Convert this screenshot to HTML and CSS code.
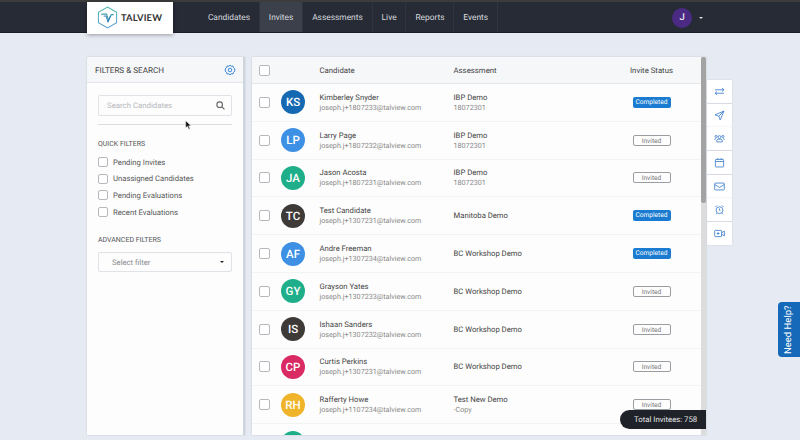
FILE: index.html
```html
<!DOCTYPE html>
<html lang="en">
<head>
<meta charset="utf-8">
<title>Talview Invites</title>
<link rel="stylesheet" href="styles.css">
</head>
<body>
<header class="topbar">
  <div class="logo">
    <svg class="logo-mark" viewBox="0 0 22 24" width="21" height="23">
      <defs><linearGradient id="lg" x1="0" y1="0" x2="0" y2="1"><stop offset="0" stop-color="#4fb9a8"/><stop offset="1" stop-color="#5b9bd5"/></linearGradient></defs>
      <path d="M11 1 L20.5 6.5 V17.5 L11 23 L1.5 17.5 V6.5 Z" fill="none" stroke="url(#lg)" stroke-width="1.1"/>
      <path d="M4.5 8.5 H10 L12 15 L15 9 H17.5" fill="none" stroke="#3f9fb0" stroke-width="1.2"/>
      <path d="M7 10.5 H9.5 L11.5 17 L14 10.5" fill="none" stroke="#2f7fb5" stroke-width="1"/>
    </svg>
    <span class="logo-text">TALVIEW</span>
  </div>
  <nav class="nav">
    <a class="nav-item">Candidates</a>
    <a class="nav-item active">Invites</a>
    <a class="nav-item">Assessments</a>
    <a class="nav-item">Live</a>
    <a class="nav-item">Reports</a>
    <a class="nav-item">Events</a>
  </nav>
  <div class="user">
    <span class="user-avatar">J</span>
    <span class="caret-light"></span>
  </div>
</header>

<main class="content">
  <aside class="filters">
    <div class="filters-head">
      <span>FILTERS &amp; SEARCH</span>
      <svg viewBox="0 0 24 24" width="12" height="12" fill="none" stroke="#3f8ad8" stroke-width="2"><path d="M12 2 L14 4.5 L18 4 L19 7.5 L22 10 L21 12 L22 14 L19 16.5 L18 20 L14 19.5 L12 22 L10 19.5 L6 20 L5 16.5 L2 14 L3 12 L2 10 L5 7.5 L6 4 L10 4.5 Z"/><circle cx="12" cy="12" r="3.6"/></svg>
    </div>
    <div class="filters-body">
      <div class="search">
        <span>Search Candidates</span>
        <svg viewBox="0 0 16 16" width="9" height="9" fill="none" stroke="#666" stroke-width="2"><circle cx="6.5" cy="6.5" r="5"/><path d="M10.5 10.5 L15 15"/></svg>
      </div>
      <div class="rule"></div>
      <h3 class="filter-title">QUICK FILTERS</h3>
      <label class="filter-opt"><span class="box"></span>Pending Invites</label>
      <label class="filter-opt"><span class="box"></span>Unassigned Candidates</label>
      <label class="filter-opt"><span class="box"></span>Pending Evaluations</label>
      <label class="filter-opt"><span class="box"></span>Recent Evaluations</label>
      <h3 class="filter-title adv">ADVANCED FILTERS</h3>
      <div class="select"><span>Select filter</span><i class="caret-dark"></i></div>
    </div>
  </aside>

  <section class="table">
    <div class="rows">
      <div class="row head">
        <span class="box"></span><span></span><span>Candidate</span><span>Assessment</span><span class="status">Invite Status</span>
      </div>
      <div class="row"><span class="box"></span><span class="av blue-d">KS</span><div class="two"><b>Kimberley Snyder</b><small>joseph.j+1807233@talview.com</small></div><div class="two"><b>IBP Demo</b><small>18072301</small></div><span class="status"><em class="done">Completed</em></span></div>
      <div class="row"><span class="box"></span><span class="av blue">LP</span><div class="two"><b>Larry Page</b><small>joseph.j+1807232@talview.com</small></div><div class="two"><b>IBP Demo</b><small>18072301</small></div><span class="status"><em class="inv">Invited</em></span></div>
      <div class="row"><span class="box"></span><span class="av green">JA</span><div class="two"><b>Jason Acosta</b><small>joseph.j+1807231@talview.com</small></div><div class="two"><b>IBP Demo</b><small>18072301</small></div><span class="status"><em class="inv">Invited</em></span></div>
      <div class="row"><span class="box"></span><span class="av dark">TC</span><div class="two"><b>Test Candidate</b><small>joseph.j+1307231@talview.com</small></div><div class="two"><b>Manitoba Demo</b></div><span class="status"><em class="done">Completed</em></span></div>
      <div class="row"><span class="box"></span><span class="av blue">AF</span><div class="two"><b>Andre Freeman</b><small>joseph.j+1307234@talview.com</small></div><div class="two"><b>BC Workshop Demo</b></div><span class="status"><em class="done">Completed</em></span></div>
      <div class="row"><span class="box"></span><span class="av green">GY</span><div class="two"><b>Grayson Yates</b><small>joseph.j+1307233@talview.com</small></div><div class="two"><b>BC Workshop Demo</b></div><span class="status"><em class="inv">Invited</em></span></div>
      <div class="row"><span class="box"></span><span class="av dark">IS</span><div class="two"><b>Ishaan Sanders</b><small>joseph.j+1307232@talview.com</small></div><div class="two"><b>BC Workshop Demo</b></div><span class="status"><em class="inv">Invited</em></span></div>
      <div class="row"><span class="box"></span><span class="av red">CP</span><div class="two"><b>Curtis Perkins</b><small>joseph.j+1307231@talview.com</small></div><div class="two"><b>BC Workshop Demo</b></div><span class="status"><em class="inv">Invited</em></span></div>
      <div class="row"><span class="box"></span><span class="av yellow">RH</span><div class="two"><b>Rafferty Howe</b><small>joseph.j+1107234@talview.com</small></div><div class="two"><b>Test New Demo</b><small>-Copy</small></div><span class="status"><em class="inv">Invited</em></span></div>
      <div class="row"><span class="box"></span><span class="av green"></span><div class="two"></div><div class="two"></div><span class="status"></span></div>
    </div>
    <div class="scrollbar"><div class="thumb"></div></div>
    <div class="total">Total Invitees: 758</div>
  </section>

  <div class="tools">
    <button class="tool"><svg viewBox="0 0 16 16"><path d="M1.5 5.5H14.5M11.5 3l3 2.5-3 2.5M14.5 10.5H1.5M4.5 8l-3 2.5 3 2.5"/></svg></button>
    <button class="tool"><svg viewBox="0 0 16 16"><path d="M14.5 1.5 L1.5 7 L7 9 L9 14.5 Z M7 9 L14.5 1.5"/></svg></button>
    <button class="tool"><svg viewBox="0 0 16 16"><circle cx="8" cy="6" r="2.2"/><circle cx="3" cy="5" r="1.5"/><circle cx="13" cy="5" r="1.5"/><path d="M4 13v-1.5a2.5 2.5 0 0 1 2.5-2.5h3A2.5 2.5 0 0 1 12 11.5V13ZM1 10a2 2 0 0 1 2-2M15 10a2 2 0 0 0-2-2"/></svg></button>
    <button class="tool"><svg viewBox="0 0 16 16"><rect x="2" y="3.5" width="12" height="11" rx="1"/><path d="M2 6.5H14M5.5 1.5V4M10.5 1.5V4"/></svg></button>
    <button class="tool"><svg viewBox="0 0 16 16"><rect x="1" y="3" width="14" height="10" rx="1"/><path d="M1 5 L8 9.5 L15 5"/></svg></button>
    <button class="tool"><svg viewBox="0 0 16 16"><circle cx="8" cy="9" r="5"/><path d="M8 6.5V9L9.5 10.5M2 4.5L4.5 2M14 4.5L11.5 2M4 13.5L3 15M12 13.5L13 15"/></svg></button>
    <button class="tool"><svg viewBox="0 0 16 16"><rect x="1" y="3.5" width="10" height="9" rx="1"/><path d="M11 7 L15 4.5 V11.5 L11 9 M6 6V10M4 8H8"/></svg></button>
  </div>
</main>

<a class="help">Need Help?</a>
<svg class="cursor" viewBox="0 0 10 14" width="7" height="10"><path d="M1 1 V11 L3.5 8.8 L5.5 13 L7 12.3 L5.2 8.2 H8.5 Z" fill="#111" stroke="#fff" stroke-width=".6"/></svg>
</body>
</html>
```
FILE: styles.css
```css
* { box-sizing: border-box; }
html, body { margin: 0; height: 440px; overflow: hidden; }
body {
  position: relative;
  background: #e6ebf3;
  font-family: Roboto, "Liberation Sans", sans-serif;
  color: #444;
  font-size: 9px;
  text-rendering: geometricPrecision;
}
.topbar {
  height: 33px;
  display: flex;
  padding-left: 87px;
  background: #262b36;
  border-top: 2px solid #3c3c3c;
  border-bottom: 1px solid #1b1e26;
}
.logo {
  width: 86px;
  height: 31.5px;
  margin-bottom: -2px;
  display: flex;
  align-items: center;
  gap: 3px;
  padding-left: 10px;
  background: #fff;
  box-shadow: 0 1px 4px rgba(0,0,0,.35);
  position: relative;
}
.logo-text {
  font-family: Lato, sans-serif;
  font-size: 9.3px;
  font-weight: 700;
  color: #333;
  letter-spacing: .2px;
}
.nav { display: flex; margin-left: 26px; }
.nav-item {
  display: flex;
  align-items: center;
  padding: 1px 8.9px 0;
  color: #d8dade;
  font-size: 8.4px;
  border-right: 1px solid #2f3440;
}
.nav-item.active { background: #3b404a; }
.user {
  display: flex;
  align-items: center;
  gap: 7px;
  margin-left: 174px;
  padding-top: 1px;
}
.user-avatar {
  width: 20px;
  height: 20px;
  border-radius: 50%;
  background: #4a2a83;
  color: #e8e4f0;
  display: flex;
  align-items: center;
  justify-content: center;
  font-size: 9.5px;
  font-weight: 500;
}
.caret-light {
  border: 2.5px solid transparent;
  border-top-color: #ddd;
  border-bottom: 0;
}
.content {
  display: flex;
  align-items: flex-start;
  padding: 24px 0 0 87px;
}
.filters {
  width: 158px;
  height: 378px;
  background: #fdfdfd;
  border-right: 2px solid #cfd5dc;
  box-shadow: 0 0 2px rgba(0,0,0,.15);
  margin-right: 7px;
  flex: none;
}
.filters-head {
  height: 26px;
  display: flex;
  align-items: center;
  justify-content: space-between;
  padding: 0 7px 0 8px;
  background: #f6f7f9;
  border-bottom: 1px solid #e3e5e8;
  font-size: 8.1px;
}
.filters-body { padding: 12px 11px 0; }
.search {
  height: 21px;
  display: flex;
  align-items: center;
  justify-content: space-between;
  padding: 0 6px 0 8px;
  border: 1px solid #dfe2e6;
  border-radius: 2px;
  color: #b5b7ba;
  font-size: 7.8px;
}
.rule { height: 1px; background: #d9dce0; margin-top: 8px; }
.filter-title {
  margin: 15px 0 5px;
  font-size: 7px;
  font-weight: 400;
  color: #555;
  line-height: 9px;
}
.filter-title.adv { margin: 16px 0 7px; }
.filter-opt {
  display: flex;
  align-items: center;
  gap: 5px;
  height: 16.6px;
  font-size: 7.7px;
  color: #555;
}
.box {
  width: 10px;
  height: 10px;
  border: 1px solid #b5b8bc;
  border-radius: 2px;
  background: #fff;
  flex: none;
}
.select {
  height: 20px;
  display: flex;
  align-items: center;
  justify-content: space-between;
  padding: 0 7px 0 13px;
  border: 1px solid #dfe2e6;
  border-radius: 2px;
  color: #8a8c90;
  font-size: 7.7px;
}
.caret-dark {
  border: 2.5px solid transparent;
  border-top-color: #222;
  border-bottom: 0;
}
.table {
  position: relative;
  width: 454px;
  height: 378px;
  background: #fdfdfd;
  overflow: hidden;
  box-shadow: 0 0 2px rgba(0,0,0,.15);
  flex: none;
  display: flex;
}
.rows { width: 449px; flex: none; }
.row {
  display: grid;
  grid-template-columns: 22px 38.5px 134px 150px 96px;
  align-items: center;
  height: 37.8px;
  padding-left: 7px;
  border-bottom: 1.5px solid #f2f3f5;
  font-size: 7.8px;
  color: #444;
}
.row.head {
  height: 27px;
  background: #f6f7f9;
  border-bottom: 1px solid #e3e5e8;
}
.row .box { width: 11px; height: 11px; }
.av {
  width: 24px;
  height: 24px;
  border-radius: 50%;
  color: #fff;
  display: flex;
  align-items: center;
  justify-content: center;
  font-size: 11.5px;
  font-weight: 500;
}
.blue-d { background: #1569b2; }
.blue { background: #3d90e3; }
.green { background: #1fae8a; }
.dark { background: #3e3a38; }
.red { background: #d92a63; }
.yellow { background: #efb42a; }
.two { display: flex; flex-direction: column; }
.two b { font-weight: 400; font-size: 7.7px; color: #444; line-height: 10px; padding-top: 1px; box-sizing: content-box; }
.two small { font-size: 7.2px; color: #888; line-height: 10px; }
.status { text-align: center; }
.status em {
  display: inline-block;
  width: 38px;
  height: 11px;
  font-style: normal;
  font-size: 6.6px;
  line-height: 10px;
  text-align: center;
  border-radius: 2px;
}
.done { background: #1a7bd0; color: #fff; }
.inv { border: 1px solid #9a9da1; color: #777; line-height: 9px; }
.scrollbar {
  width: 5px;
  background: #dcdcdc;
}
.thumb { height: 146px; background: #a3a3a3; border-radius: 2px; }
.total {
  position: absolute;
  right: 0;
  bottom: 6px;
  width: 86px;
  height: 19px;
  padding-left: 14px;
  background: #1f2329;
  border-radius: 10px 0 0 10px;
  color: #e6e7e9;
  font-size: 7.8px;
  line-height: 19px;
}
.tools {
  display: flex;
  flex-direction: column;
  gap: 0.7px;
  margin: 23px 0 0 1px;
  width: 25px;
}
.tool {
  width: 25px;
  height: 23px;
  padding: 0;
  border: 0;
  border-radius: 1px;
  background: #fff;
  box-shadow: 0 0 2px rgba(0,0,0,.12);
  display: flex;
  align-items: center;
  justify-content: center;
}
.tool svg {
  width: 11px;
  height: 11px;
  fill: none;
  stroke: #4a86d0;
  stroke-width: 1.3;
}
.help {
  position: absolute;
  right: 0;
  top: 302px;
  width: 22px;
  height: 55px;
  background: #1569b8;
  color: #fff;
  font-size: 9.5px;
  writing-mode: vertical-rl;
  transform: rotate(180deg);
  border-radius: 0 4px 4px 0;
  text-align: center;
  line-height: 22px;
}
.cursor { position: absolute; left: 185px; top: 120px; }
```
